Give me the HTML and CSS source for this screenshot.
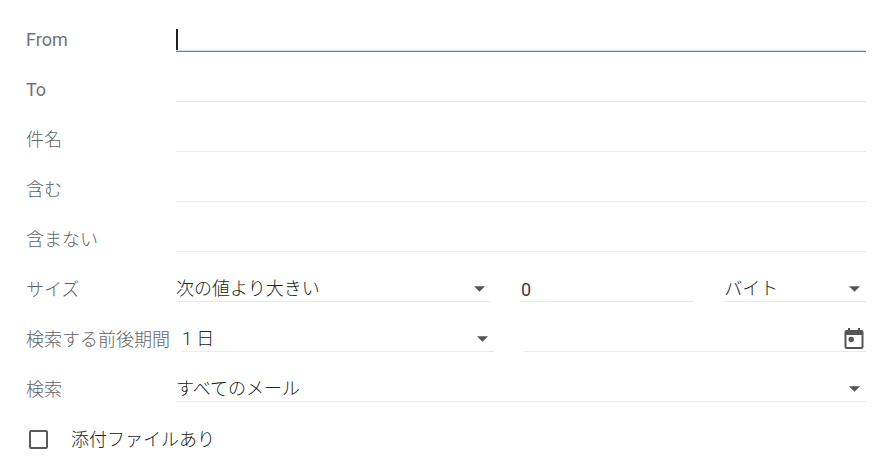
FILE: index.html
```html
<!DOCTYPE html>
<html lang="ja">
<head>
<meta charset="utf-8">
<meta name="viewport" content="width=device-width, initial-scale=1">
<title>メール検索</title>
<link rel="stylesheet" href="styles.css">
</head>
<body>
<form class="search">
  <div class="row">
    <label class="label latin" for="from">From</label>
    <div class="field field-active"><input class="control" id="from" type="text"></div>
  </div>
  <div class="row">
    <label class="label latin" for="to">To</label>
    <div class="field"><input class="control" id="to" type="text"></div>
  </div>
  <div class="row">
    <label class="label" for="subject">件名</label>
    <div class="field"><input class="control" id="subject" type="text"></div>
  </div>
  <div class="row">
    <label class="label" for="has">含む</label>
    <div class="field"><input class="control" id="has" type="text"></div>
  </div>
  <div class="row">
    <label class="label" for="hasnot">含まない</label>
    <div class="field"><input class="control" id="hasnot" type="text"></div>
  </div>
  <div class="row">
    <label class="label" for="size-op">サイズ</label>
    <div class="group group-size">
      <div class="field">
        <select class="control" id="size-op"><option>次の値より大きい</option></select>
        <svg class="arrow" viewBox="0 0 10 5" aria-hidden="true"><path d="M0 0h10L5 5z"/></svg>
      </div>
      <div class="field"><input class="control control-number latin" type="text" value="0" aria-label="サイズの値"></div>
      <div class="field">
        <select class="control" aria-label="単位"><option>バイト</option></select>
        <svg class="arrow" viewBox="0 0 10 5" aria-hidden="true"><path d="M0 0h10L5 5z"/></svg>
      </div>
    </div>
  </div>
  <div class="row">
    <label class="label" for="within">検索する前後期間</label>
    <div class="group group-date">
      <div class="field">
        <select class="control" id="within"><option>1 日</option></select>
        <svg class="arrow" viewBox="0 0 10 5" aria-hidden="true"><path d="M0 0h10L5 5z"/></svg>
      </div>
      <div class="field">
        <input class="control" type="text" aria-label="日付">
        <button class="calendar" type="button" aria-label="カレンダー">
          <svg viewBox="0 0 20 22" aria-hidden="true"><path fill-rule="evenodd" d="M4 0h2v2h8V0h2v2h1.500a2 2 0 0 1 2 2v15a2 2 0 0 1-2 2h-15a2 2 0 0 1-2-2V4a2 2 0 0 1 2-2H4zM2.500 7v12h15V7z"/><circle cx="7.200" cy="11.500" r="2.700"/></svg>
        </button>
      </div>
    </div>
  </div>
  <div class="row">
    <label class="label" for="scope">検索</label>
    <div class="field">
      <select class="control" id="scope"><option>すべてのメール</option></select>
      <svg class="arrow" viewBox="0 0 10 5" aria-hidden="true"><path d="M0 0h10L5 5z"/></svg>
    </div>
  </div>
  <div class="row row-check">
    <input class="checkbox" id="attachment" type="checkbox">
    <label for="attachment">添付ファイルあり</label>
  </div>
</form>
</body>
</html>
```
FILE: styles.css
```css
* {
  box-sizing: border-box;
}

body {
  margin: 0;
  background: #fff;
  color: #222;
  font: 300 18px/24px Roboto, "Noto Sans CJK JP", sans-serif;
}

.search {
  padding: 2px 20px 0 26px;
}

.row {
  display: flex;
  align-items: flex-end;
  height: 50px;
}

.label {
  flex: none;
  min-width: 150px;
  padding-right: 12px;
  color: #5f6368;
  white-space: nowrap;
}

.group {
  display: grid;
  flex: 1;
  min-width: 0;
  column-gap: 30px;
}

.group-size {
  grid-template-columns: 20fr 11fr 9fr;
}

.group-date {
  grid-template-columns: 21fr 23fr;
}

.field {
  position: relative;
  display: flex;
  flex: 1;
  min-width: 0;
  height: 28px;
  border-bottom: 1px solid #ebebeb;
}

.control {
  flex: 1;
  width: 100%;
  min-width: 0;
  margin: 0;
  padding: 2px 0 0;
  border: 0;
  outline: 0;
  border-radius: 0;
  background: transparent;
  color: inherit;
  font: inherit;
  appearance: none;
}

.control-number {
  padding-top: 4px;
}

.label.latin {
  color: #707377;
  font-weight: 400;
}

.control.latin {
  color: #3c3c3c;
  font-weight: 400;
}

.field-active {
  border-bottom-color: #4d7fe0;
  box-shadow: inset 0 -1px #d3e0f8;
}

/* insertion point of the active field */
.field-active::before {
  content: "";
  position: absolute;
  left: 0;
  bottom: 1px;
  width: 2px;
  height: 21px;
  background: #222;
}

.arrow {
  position: absolute;
  right: 6px;
  bottom: 9px;
  width: 11px;
  height: 6px;
  fill: #555;
  pointer-events: none;
}

.calendar {
  flex: none;
  display: block;
  width: 20px;
  height: 22px;
  margin: 4px 2px 0 0;
  padding: 0;
  border: 0;
  background: none;
}

.calendar svg {
  display: block;
  width: 20px;
  height: 22px;
  fill: #555;
}

.row-check {
  gap: 23px;
}

.checkbox {
  flex: none;
  width: 19px;
  height: 19px;
  margin: 0 0 3px 3px;
  border: 2px solid #5a5a5a;
  border-radius: 2px;
  background: #fff;
  appearance: none;
}

.checkbox:checked {
  background: #5a5a5a;
}
```
